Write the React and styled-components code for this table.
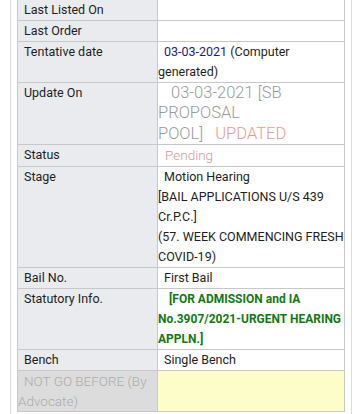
import React from "react";
import styled, { createGlobalStyle } from "styled-components";

const GlobalStyle = createGlobalStyle`
  body {
    margin: 0;
    background: #ffffff;
    font-family: Roboto, "Noto Sans", sans-serif;
  }
`;

const Page = styled.div`
  margin: 0 8px 0 10px;
  padding: 0 6px;
  border-left: 1px solid #dcdcdc;
  border-right: 1px solid #dcdcdc;
  height: 414px;
  overflow: hidden;
`;

const Table = styled.table`
  width: 328px;
  margin-top: -1px;
  border-collapse: collapse;
  table-layout: fixed;
`;

const Cell = styled.td`
  padding: 0;
  vertical-align: top;
  font-size: 12.5px;
  line-height: 20px;
  border: 1px solid #c8c8c8;
  text-indent: ${p => p.$indent || "6px"};
`;

const Label = styled(Cell)`
  width: 139px;
  color: ${p => (p.$muted ? "#ababab" : "#1e1e1e")};
  background: ${p => (p.$muted ? "#dcdcdc" : "#e9ebef")};
  font-size: ${p => (p.$muted ? "13.5px" : "12.5px")};
  font-weight: ${p => (p.$muted ? 300 : 400)};
`;

const Value = styled(Cell)`
  color: #1e1e1e;
  background: ${p => (p.$note ? "#fdfdc9" : "#ffffff")};
  font-size: ${p => (p.$big ? "16.5px" : "12.5px")};
  line-height: ${p => (p.$big ? "20.4px" : "20px")};
  font-weight: ${p => (p.$big ? 300 : 400)};
`;

const DateText = styled.span`
  color: #1c1c7e;
`;

const Faded = styled.span`
  color: ${p => (p.$alert ? "#e89a9a" : "#9a9a9a")};
`;

const Pending = styled.span`
  font-size: 13.5px;
  font-weight: 300;
  color: #d39a9a;
`;

const Statutory = styled.span`
  font-size: 12px;
  font-weight: 700;
  color: #107a10;
`;

const BlockLine = styled.span`
  display: block;
  text-indent: 0;
`;

const rows = [
  { label: "Last Listed On", value: "" },
  { label: "Last Order", value: "" },
  {
    label: "Tentative date",
    value: (
      <>
        <DateText>03-03-2021</DateText> (Computer generated)
      </>
    ),
  },
  {
    label: "Update On",
    indent: "13px",
    big: true,
    value: (
      <Faded>
        03-03-2021 [SB PROPOSAL POOL]&nbsp;&nbsp;&nbsp;<Faded $alert>UPDATED</Faded>
      </Faded>
    ),
  },
  { label: "Status", indent: "7px", value: <Pending>Pending</Pending> },
  {
    label: "Stage",
    value: (
      <>
        Motion Hearing
        <BlockLine>[BAIL APPLICATIONS U/S 439 Cr.P.C.]</BlockLine>
        <BlockLine>(57. WEEK COMMENCING FRESH COVID-19)</BlockLine>
      </>
    ),
  },
  { label: "Bail No.", value: "First Bail" },
  {
    label: "Statutory Info.",
    indent: "11px",
    value: (
      <Statutory>
        [FOR ADMISSION and IA No.3907/2021-URGENT HEARING APPLN.]
      </Statutory>
    ),
  },
  { label: "Bench", value: "Single Bench" },
  { label: "NOT GO BEFORE (By Advocate)", muted: true, note: true, value: "" },
];

const App = () => (
  <>
    <GlobalStyle />
    <Page>
      <Table>
        <tbody>
          {rows.map(row => (
            <tr key={row.label}>
              <Label $muted={row.muted}>{row.label}</Label>
              <Value $indent={row.indent} $note={row.note} $big={row.big}>
                {row.value}
              </Value>
            </tr>
          ))}
        </tbody>
      </Table>
    </Page>
  </>
);

export default App;
